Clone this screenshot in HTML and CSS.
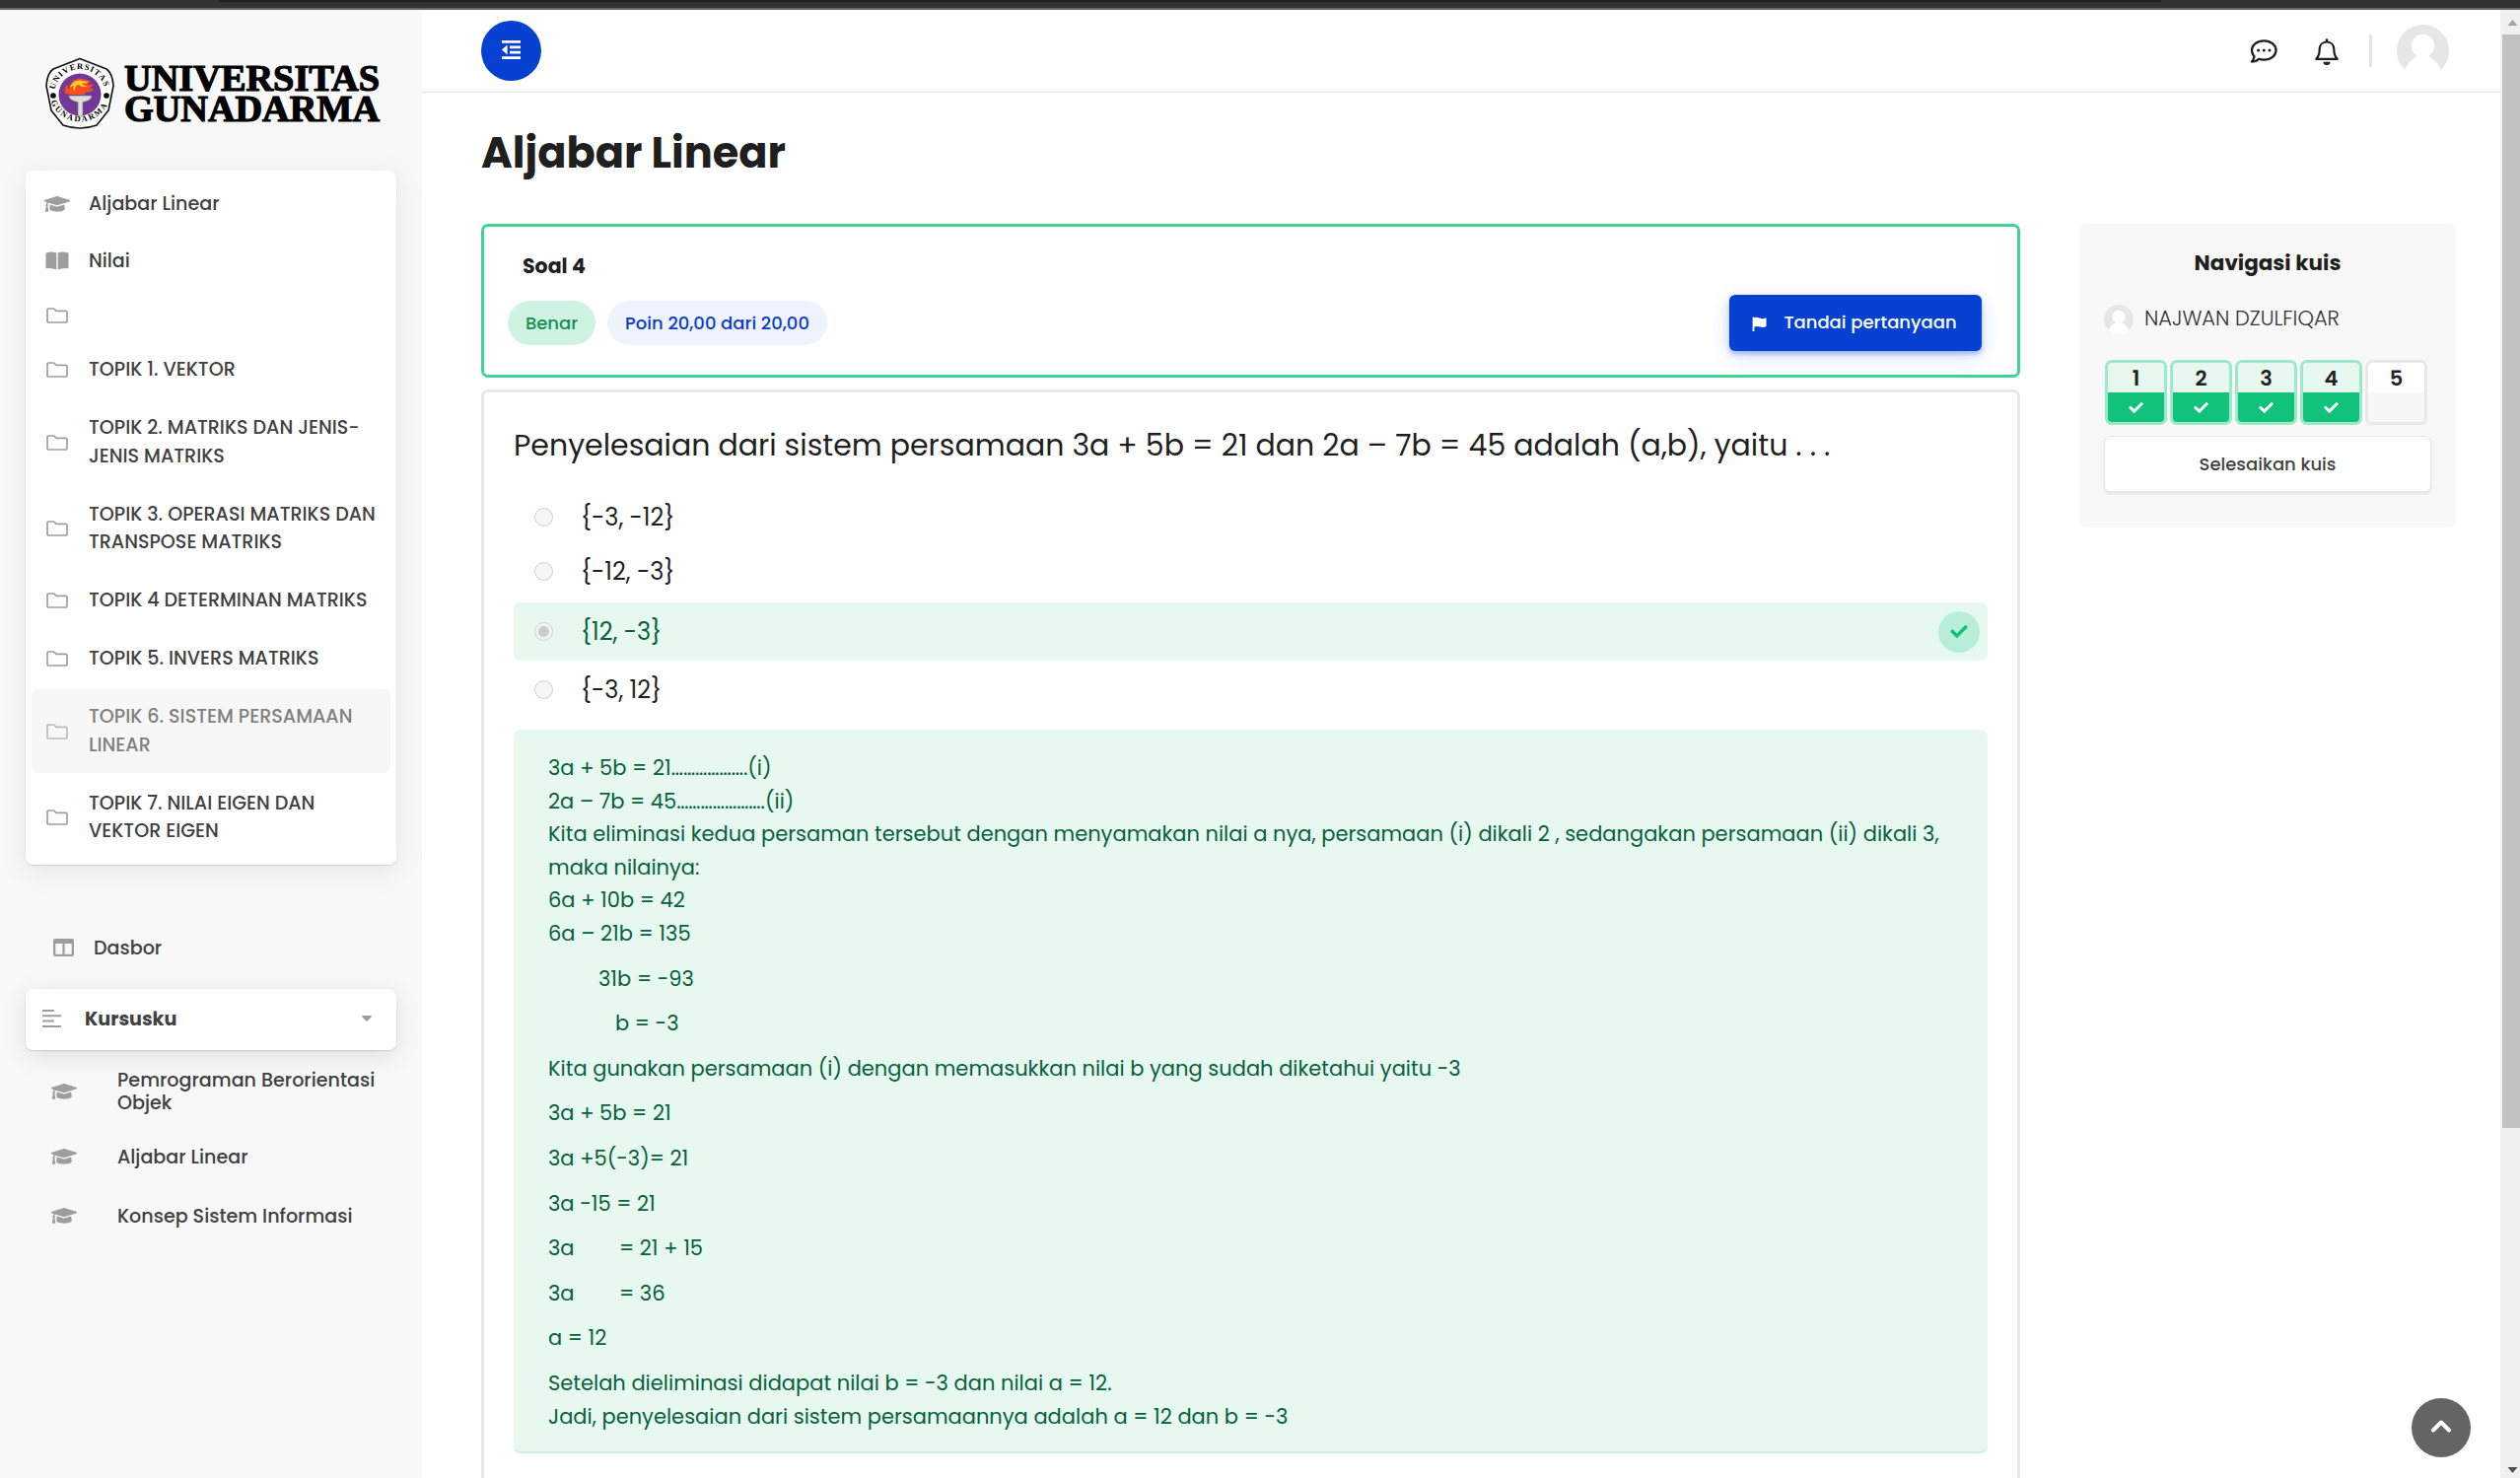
FILE: index.html
```html
<!DOCTYPE html>
<html lang="id">
<head>
<meta charset="utf-8">
<title>Aljabar Linear</title>
<link rel="stylesheet" href="styles.css">
</head>
<body>
<svg class="defs" aria-hidden="true">
  <symbol id="cap" viewBox="0 64 640 388"><path d="M622.34 153.2L343.4 67.5c-15.2-4.67-31.6-4.67-46.79 0L17.66 153.2c-23.54 7.23-23.54 38.36 0 45.59l48.63 14.94c-10.67 13.19-17.23 29.28-17.88 46.9C38.78 266.15 32 276.11 32 288c0 10.78 5.68 19.85 13.86 25.65L20.33 428.53C18.11 438.52 25.71 448 35.94 448h56.11c10.24 0 17.84-9.48 15.62-19.47L82.14 313.65C90.32 307.85 96 298.78 96 288c0-11.57-6.47-21.25-15.66-26.87.76-15.02 8.44-28.3 20.69-36.72L296.6 284.5c9.06 2.78 26.44 6.25 46.79 0l278.95-85.7c23.55-7.24 23.55-38.36 0-45.6zM352.79 315.09c-28.53 8.76-52.84 3.92-65.59 0l-145.02-44.55L128 384c0 35.35 85.96 64 192 64s192-28.65 192-64l-14.18-113.47-145.03 44.56z"/></symbol>
  <symbol id="check" viewBox="0 64 512 384"><path d="M173.898 439.404l-166.4-166.4c-9.997-9.997-9.997-26.206 0-36.204l36.203-36.204c9.997-9.998 26.207-9.998 36.204 0L192 312.69 432.095 72.596c9.997-9.997 26.207-9.997 36.204 0l36.203 36.204c9.997 9.997 9.997 26.206 0 36.204l-294.4 294.401c-9.998 9.997-26.207 9.997-36.204-.001z"/></symbol>
  <symbol id="folder" viewBox="0 0 22 16"><path d="M2.200 1h5.300l2.600 2.400h9.700a1.200 1.200 0 0 1 1.200 1.200v9.200a1.200 1.200 0 0 1-1.200 1.200H2.200A1.200 1.200 0 0 1 1 13.800V2.200A1.200 1.200 0 0 1 2.200 1z" fill="none" stroke="currentColor" stroke-width="1.700"/></symbol>
  <symbol id="avatar" viewBox="0 0 53 53"><clipPath id="round"><circle cx="26.500" cy="26.500" r="26.500"/></clipPath><g clip-path="url(#round)"><rect width="53" height="53" fill="#e6e6e6"/><circle cx="26.500" cy="21.500" r="11.700" fill="#fff"/><path d="M21 30.500c0 2-2 2.500-4 4C12 38 9 43 8 47l3 6h31l3-6c-1-4-4-9-9-12.500-2-1.500-4-2-4-4z" fill="#fff"/></g></symbol>
</svg>
<div class="window-edge"><div class="window-tab"></div></div>
<div class="app">
  <aside class="sidebar">
    <svg class="logo" viewBox="0 0 340 74" role="img" aria-label="Universitas Gunadarma">
      <path d="M35 1.500L62 12Q68 16 69 29L64 54L52 69Q35 75 18 69L6 54L1 29Q2 16 8 12Z" fill="#fff" stroke="#111" stroke-width="1.600" stroke-linejoin="round"/>
      <circle cx="35" cy="38" r="21.500" fill="#733795"/>
      <circle cx="8" cy="39" r="2.800"/><circle cx="62" cy="39" r="2.800"/>
      <path id="arc-top" d="M9.500 33A26 26 0 0 1 60.500 33" fill="none"/>
      <path id="arc-bottom" d="M5.500 45A31.500 31.500 0 0 0 64.500 45" fill="none"/>
      <text class="seal"><textPath href="#arc-top" textLength="68">UNIVERSITAS</textPath></text>
      <text class="seal"><textPath href="#arc-bottom" textLength="72">GUNADARMA</textPath></text>
      <path d="M20 37c-1-5 0-8 3-9-1 3 0 4 1 4 1-7 6-11 13-10 4 0 6 3 9 2-1 2-2 3-4 3 3 1 5 1 7 0-1 3-3 4-5 4 2 1 3 1 5 1-2 3-5 4-7 3l-3 3H27c-3 0-5-1-7-1z" fill="#f0501e"/>
      <path d="M25 31c2-6 7-9 13-7 3 1 4 1 6 0-2 3-5 3-7 2 1 3 4 3 6 3-3 2-7 1-9-1-3 0-4 3-4 6-2-1-2-3-1-5-2 0-3 1-4 2z" fill="#ffce2b"/>
      <path d="M24 39h23c0 4-5 6-9 6.500V58l-2.500 3-2.500-3V45.500c-4-.5-9-2.500-9-6.500z" fill="#ddd" stroke="#777" stroke-width=".7"/>
      <text class="wordmark" x="80" y="34" textLength="259" lengthAdjust="spacingAndGlyphs">UNIVERSITAS</text>
      <text class="wordmark" x="80" y="64.500" textLength="259" lengthAdjust="spacingAndGlyphs">GUNADARMA</text>
    </svg>
    <nav class="course-nav">
      <a class="nav-row tall"><span class="nav-icon"><svg class="i-cap"><use href="#cap"/></svg></span><span>Aljabar Linear</span></a>
      <a class="nav-row tall"><span class="nav-icon"><svg class="i-book" viewBox="0 0 24 19"><path d="M.5 1.500Q6-.3 11.300 1.200V18.600Q6 16.400.5 17.300zM23.500 1.500Q18-.3 12.700 1.200V18.600Q18 16.400 23.500 17.300z"/></svg></span><span>Nilai</span></a>
      <a class="nav-row blank"><span class="nav-icon"><svg class="i-folder"><use href="#folder"/></svg></span></a>
      <a class="nav-row"><span class="nav-icon"><svg class="i-folder"><use href="#folder"/></svg></span><span>TOPIK 1. VEKTOR</span></a>
      <a class="nav-row"><span class="nav-icon"><svg class="i-folder"><use href="#folder"/></svg></span><span>TOPIK 2. MATRIKS DAN JENIS-<br>JENIS MATRIKS</span></a>
      <a class="nav-row"><span class="nav-icon"><svg class="i-folder"><use href="#folder"/></svg></span><span>TOPIK 3. OPERASI MATRIKS DAN<br>TRANSPOSE MATRIKS</span></a>
      <a class="nav-row"><span class="nav-icon"><svg class="i-folder"><use href="#folder"/></svg></span><span>TOPIK 4 DETERMINAN MATRIKS</span></a>
      <a class="nav-row"><span class="nav-icon"><svg class="i-folder"><use href="#folder"/></svg></span><span>TOPIK 5. INVERS MATRIKS</span></a>
      <a class="nav-row current"><span class="nav-icon"><svg class="i-folder"><use href="#folder"/></svg></span><span>TOPIK 6. SISTEM PERSAMAAN<br>LINEAR</span></a>
      <a class="nav-row"><span class="nav-icon"><svg class="i-folder"><use href="#folder"/></svg></span><span>TOPIK 7. NILAI EIGEN DAN<br>VEKTOR EIGEN</span></a>
    </nav>
    <a class="dashboard"><svg class="i-columns" viewBox="0 0 21 18"><path fill-rule="evenodd" d="M2 0h17a2 2 0 0 1 2 2v14a2 2 0 0 1-2 2H2a2 2 0 0 1-2-2V2a2 2 0 0 1 2-2zM2.300 5v10.700h7.100V5zM11.600 5v10.700h7.100V5z"/></svg><span>Dasbor</span></a>
    <a class="my-courses"><svg class="i-lines" viewBox="0 0 19 18"><path d="M0 0h12v2H0zM0 5.300h19v2H0zM0 10.600h12v2H0zM0 16h19v2H0z"/></svg><span>Kursusku</span><svg class="i-caret" viewBox="0 0 10 6"><path d="M.5 0h9L10 1 5.600 5.600a1 1 0 0 1-1.200 0L0 1z"/></svg></a>
    <div class="course-list">
      <a class="course two"><svg class="i-cap"><use href="#cap"/></svg><span>Pemrograman Berorientasi<br>Objek</span></a>
      <a class="course"><svg class="i-cap"><use href="#cap"/></svg><span>Aljabar Linear</span></a>
      <a class="course last"><svg class="i-cap"><use href="#cap"/></svg><span>Konsep Sistem Informasi</span></a>
    </div>
  </aside>
  <div class="page">
    <header class="topbar">
      <button class="toggle"><svg class="i-outdent" viewBox="0 0 19 19"><path d="M0 0h19v2.800H0zM8 5.400h11v2.800H8zM8 10.800h11v2.800H8zM0 16.200h19V19H0zM0 9.500L5.600 4.600v9.800z"/></svg></button>
      <div class="tools">
        <svg class="i-chat" viewBox="0 0 28 25"><path d="M14.300 1.300c7 0 12.200 4.200 12.200 9.700s-5.200 9.700-12.200 9.700c-1.900 0-3.700-.3-5.200-.9-1.900 1.600-4.500 2.800-7.200 2.800 1.300-1.500 2.300-3.300 2.600-5.200C2.900 15.700 2 13.400 2 11c0-5.500 5.300-9.700 12.300-9.700z" fill="none" stroke="#1d1d1d" stroke-width="2.300" stroke-linejoin="round"/><circle cx="8.600" cy="11" r="1.500"/><circle cx="14.300" cy="11" r="1.500"/><circle cx="20" cy="11" r="1.500"/></svg>
        <svg class="i-bell" viewBox="0 0 24 27"><path d="M12 3.500c-4.500 0-7.300 3.300-7.300 7.500 0 5-1 7.500-3.400 9.800h21.400c-2.400-2.300-3.400-4.800-3.400-9.800 0-4.200-2.800-7.500-7.300-7.500z" fill="none" stroke="#1d1d1d" stroke-width="2.200" stroke-linejoin="round"/><rect x="10.700" y=".3" width="2.600" height="4" rx="1.300"/><path d="M8.500 23.700h7a3.500 3.300 0 0 1-7 0z"/></svg>
        <span class="divider"></span>
        <svg class="avatar"><use href="#avatar"/></svg>
      </div>
    </header>
    <div class="content">
      <main class="quiz">
        <h1>Aljabar Linear</h1>
        <section class="info">
          <h2>Soal 4</h2>
          <div class="info-row">
            <span class="badge good">Benar</span>
            <span class="badge points">Poin 20,00 dari 20,00</span>
            <button class="flag"><svg class="i-flag" viewBox="0 0 15 15"><path d="M1.800 1.200Q4.500 0 7.500 1.400T14 1.500Q14.500 1.200 14.500 2v8q-3 1.600-6.500.5T2.400 10.700V15H.6V.5h1.200z"/></svg><span>Tandai pertanyaan</span></button>
          </div>
        </section>
        <section class="question">
          <p class="prompt">Penyelesaian dari sistem persamaan 3a + 5b = 21 dan 2a – 7b = 45 adalah (a,b), yaitu . . .</p>
          <div class="option o1"><i class="radio"></i><span>{-3, -12}</span></div>
          <div class="option o2"><i class="radio"></i><span>{-12, -3}</span></div>
          <div class="option right"><i class="radio on"></i><span>{12, -3}</span><b class="tick"><svg><use href="#check"/></svg></b></div>
          <div class="option o4"><i class="radio"></i><span>{-3, 12}</span></div>
          <div class="feedback">
            <p>3a + 5b = 21……………….(i)<br>2a – 7b = 45………………….(ii)<br>Kita eliminasi kedua persaman tersebut dengan menyamakan nilai a nya, persamaan (i) dikali 2 , sedangakan persamaan (ii) dikali 3,<br>maka nilainya:<br>6a + 10b = 42<br>6a – 21b = 135</p>
            <p class="indent-1">31b = -93</p>
            <p class="indent-2">b = -3</p>
            <p>Kita gunakan persamaan (i) dengan memasukkan nilai b yang sudah diketahui yaitu -3</p>
            <p>3a + 5b = 21</p>
            <p>3a +5(-3)= 21</p>
            <p>3a -15 = 21</p>
            <p class="columns"><span>3a</span><span>= 21 + 15</span></p>
            <p class="columns"><span>3a</span><span>= 36</span></p>
            <p>a = 12</p>
            <p>Setelah dieliminasi didapat nilai b = -3 dan nilai a = 12.<br>Jadi, penyelesaian dari sistem persamaannya adalah a = 12 dan b = -3</p>
          </div>
        </section>
      </main>
      <aside class="quiz-nav">
        <h3>Navigasi kuis</h3>
        <div class="user"><svg class="avatar small"><use href="#avatar"/></svg><span>NAJWAN DZULFIQAR</span></div>
        <div class="numbers">
          <a class="num done"><span>1</span><b><svg><use href="#check"/></svg></b></a>
          <a class="num done"><span>2</span><b><svg><use href="#check"/></svg></b></a>
          <a class="num done"><span>3</span><b><svg><use href="#check"/></svg></b></a>
          <a class="num done"><span>4</span><b><svg><use href="#check"/></svg></b></a>
          <a class="num"><span>5</span><b></b></a>
        </div>
        <button class="finish">Selesaikan kuis</button>
      </aside>
    </div>
  </div>
  <div class="scrollbar"><svg viewBox="0 0 10 6"><path d="M0 6L5 0l5 6z" fill="#a3a3a3"/></svg><div class="thumb"></div><svg class="down" viewBox="0 0 10 6"><path d="M0 0l5 6 5-6z" fill="#505050"/></svg></div>
</div>
<button class="to-top"><svg viewBox="0 0 22 14"><path d="M3 11.500l8-8 8 8" fill="none" stroke="#fff" stroke-width="4" stroke-linecap="round" stroke-linejoin="round"/></svg></button>
</body>
</html>
```
FILE: styles.css
```css
* { box-sizing: border-box; }
body { margin: 0; width: 2556px; height: 1499px; overflow: hidden; background: #fff; color: #1f1f1f; font-family: Poppins, Inter, sans-serif; display: flex; flex-direction: column; }
h1, h2, h3, p { margin: 0; }
button { border: 0; font: inherit; padding: 0; display: flex; align-items: center; justify-content: center; }
svg { display: block; fill: currentColor; flex: none; }
.defs { width: 0; height: 0; position: absolute; }

.window-edge { height: 10px; flex: none; background: #333; border-bottom: 2px solid #666; }
.window-tab { width: 1970px; height: 2px; margin-left: 222px; background: #202124; }
.app { height: 1489px; display: grid; grid-template-columns: 428px 1fr 20px; grid-template-rows: 1489px; }

.sidebar { background: #f8f8f8; padding: 48px 26px 0; color: #404040; font-size: 19.125px; font-weight: 500; }
.logo { width: 340px; height: 74px; margin-left: 20px; fill: #000; }
.seal { font: bold 8.500px "Liberation Serif", serif; }
.wordmark { font: bold 37px "Liberation Serif", serif; stroke: #000; stroke-width: 1.200px; }
.course-nav { height: 704px; margin-top: 41px; padding: 6px 6px 0; background: #fff; border-radius: 7px; box-shadow: 0 1px 2px rgba(0,0,0,.12), 0 6px 30px rgba(0,0,0,.08); display: flex; flex-direction: column; gap: 2.300px; }
.nav-row { display: flex; align-items: center; padding: 14.100px 0; line-height: 28.500px; border-radius: 7px; white-space: nowrap; flex: none; }
.nav-row.tall { height: 55.700px; }
.nav-row.blank { height: 50.800px; margin-bottom: -1px; }
.nav-icon { width: 58px; padding-right: 6px; color: #9e9e9e; display: flex; justify-content: center; flex: none; }
.i-cap { width: 26px; height: 16px; color: #9e9e9e; }
.i-book { width: 24px; height: 19px; }
.i-folder { width: 22px; height: 16px; }
.current { background: #f7f7f7; color: #808080; }
.current .nav-icon { color: #bbb; }
.dashboard { display: flex; align-items: center; gap: 20px; height: 50px; margin-top: 59px; padding-left: 28px; }
.i-columns { width: 21px; height: 18px; color: #9e9e9e; }
.my-courses { display: flex; align-items: center; height: 62px; margin-top: 17px; padding: 0 25px 2px 17px; background: #fff; border-radius: 7px; font-weight: 700; box-shadow: 0 1px 2px rgba(0,0,0,.14), 0 6px 26px rgba(0,0,0,.1); }
.i-lines { width: 19px; height: 18px; margin-right: 24px; color: #9e9e9e; }
.i-caret { width: 10px; height: 6px; margin-left: auto; color: #9e9e9e; }
.course { display: flex; align-items: center; gap: 41px; height: 56px; padding-left: 26px; line-height: 23px; white-space: nowrap; }
.course.two { height: 76px; margin-top: 4px; }
.course.last { height: 64px; }

.page { min-width: 0; overflow: hidden; }
.topbar { height: 84px; border-bottom: 1px solid #e5e5e5; padding: 0 52px 1px 60px; display: flex; align-items: center; justify-content: space-between; }
.toggle { width: 61px; height: 61px; border-radius: 50%; background: #0641d1; color: #fff; }
.i-outdent { width: 19px; height: 19px; margin-bottom: 2px; }
.tools { display: flex; align-items: center; }
.i-chat { width: 28px; height: 25px; margin: 3px 0 0 -1px; }
.i-bell { width: 24px; height: 27px; margin: 2px 0 0 38px; }
.divider { width: 3px; height: 33px; border-radius: 2px; background: #e5e5e5; margin: 0 25px 0 31px; }
.avatar { width: 53px; height: 53px; }

.content { display: grid; grid-template-columns: 1561px 382px; gap: 60px; padding-left: 60px; }
h1 { height: 133px; padding-top: 32px; font-size: 43.100px; line-height: 58px; font-weight: 700; white-space: nowrap; }
.info { height: 156px; border: 3px solid #3bd596; border-radius: 7px; padding: 27px 36px 0 24px; }
.info h2 { font-size: 20.500px; line-height: 25px; padding-left: 15px; font-weight: 700; }
.info-row { display: flex; align-items: center; margin-top: 17px; height: 57px; }
.badge { height: 45px; border-radius: 23px; display: flex; align-items: center; justify-content: center; font-size: 18px; font-weight: 500; white-space: nowrap; }
.good { width: 89px; background: #cff3e3; color: #149155; }
.points { width: 223px; margin-left: 12px; background: #eff3ff; color: #0b3cc8; }
.flag { width: 256px; height: 57px; margin-left: auto; border-radius: 6px; background: #0641d1; color: #fff; font-size: 18px; font-weight: 500; gap: 17px; box-shadow: 0 3px 5px rgba(6,65,209,.35), 0 6px 22px rgba(6,65,209,.14); }
.flag span { padding-bottom: 2px; margin-right: 2px; }
.i-flag { width: 15px; height: 15px; margin-top: 1px; }
.question { height: 1130px; margin-top: 12px; border: 3px solid #e8e8e8; border-radius: 7px; padding: 0 30px; }
.prompt { height: 96px; padding-top: 29px; font-size: 30px; line-height: 50px; font-weight: 400; white-space: nowrap; }
.option { display: flex; align-items: center; height: 59px; padding-left: 21px; font-size: 24px; font-weight: 400; border-radius: 7px; white-space: nowrap; }
.radio { width: 19px; height: 19px; margin-right: 28px; border: 1.500px solid #cfcfcf; border-radius: 50%; background: #f5f5f5; }
.radio.on { background: radial-gradient(circle, #c8cfcb 5px, #f0f6f3 6px); }
.o1 { height: 61px; }
.o2 { height: 49px; margin-bottom: 7px; }
.right { background: #e7f8f0; color: #06613c; padding-right: 8px; }
.tick { width: 42px; height: 42px; margin-left: auto; border-radius: 50%; background: #b8eed8; color: #10c27a; display: flex; align-items: center; justify-content: center; }
.tick svg { width: 18px; height: 13px; }
.feedback { height: 734px; margin-top: 11px; padding: 22px 35px 0; background: #e7f8f0; border-bottom: 2px solid #c9f0e0; border-radius: 7px; color: #06613c; font-size: 21px; line-height: 33.600px; white-space: nowrap; }
.feedback p { margin-bottom: 12px; }
.feedback .indent-1 { padding-left: 51px; }
.feedback .indent-2 { padding-left: 68px; }
.columns { display: grid; grid-template-columns: 72px 1fr; }
.columns span { justify-self: start; }

.quiz-nav { height: 308px; margin-top: 133px; padding: 24px 25px; background: #f8f8f8; border-radius: 7px; }
h3 { font-size: 21.500px; line-height: 32px; text-align: center; font-weight: 700; }
.user { display: flex; align-items: center; gap: 11px; margin-top: 26px; height: 30px; font-size: 20.900px; font-weight: 300; color: #333; }
.user span { padding-bottom: 4px; }
.avatar.small { width: 30px; height: 30px; }
.numbers { display: flex; gap: 3px; margin-top: 26px; padding-left: 1px; }
.num { width: 63px; height: 66px; border: 3px solid #e8e8e8; border-radius: 7px; background: #fff; overflow: hidden; text-align: center; font-size: 21px; line-height: 31px; font-weight: 600; display: grid; grid-template-rows: 30px 30px; }
.num b { background: #f7f7f7; color: #fff; display: flex; align-items: center; justify-content: center; }
.num svg { width: 15px; height: 11px; }
.done { background: #e7f8f0; border-color: #9de8c9; }
.done b { background: #10c27a; }
.finish { width: 332px; height: 57px; margin-top: 11px; background: #fff; border: 1px solid #e4e7f0; border-radius: 6px; color: #404040; font-size: 18px; font-weight: 500; box-shadow: 0 2px 3px rgba(0,0,0,.08); }

.scrollbar { background: #f0f0f0; padding: 10px 0 0 2px; display: flex; flex-direction: column; }
.scrollbar svg { width: 11px; height: 6px; margin-left: 5px; }
.thumb { width: 18px; height: 1109px; margin-top: 9px; background: #c1c1c1; }
.scrollbar .down { margin-top: auto; margin-bottom: 5px; }
.to-top { position: fixed; right: 50px; bottom: 21px; width: 60px; height: 60px; border-radius: 50%; background: #646464; }
.to-top svg { width: 22px; height: 14px; margin-bottom: 4px; }
```
